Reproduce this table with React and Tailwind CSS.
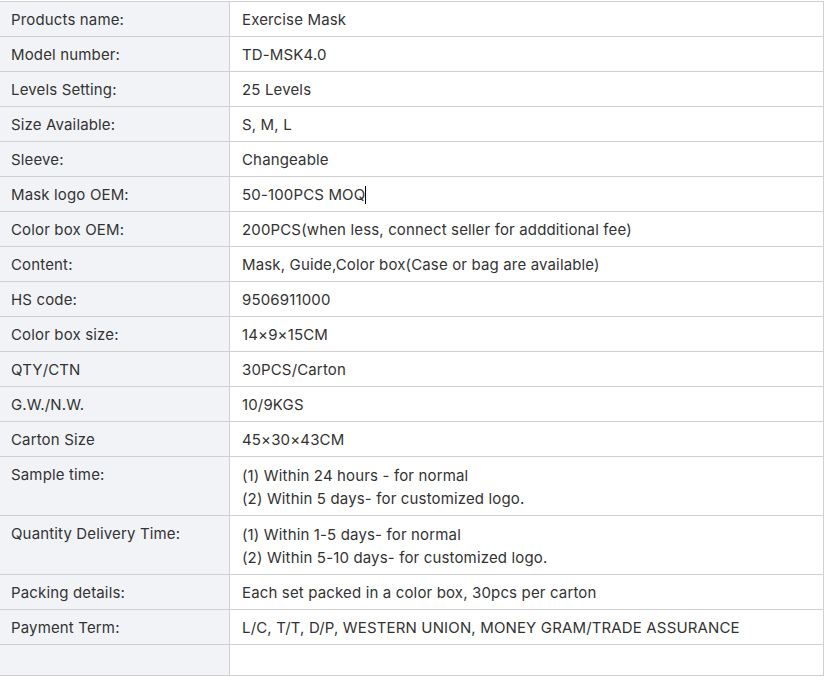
import React from "react"

const rows = [
  ["Products name:", ["Exercise Mask"]],
  ["Model number:", ["TD-MSK4.0"]],
  ["Levels Setting:", ["25 Levels"]],
  ["Size Available:", ["S, M, L"]],
  ["Sleeve:", ["Changeable"]],
  ["Mask logo OEM:", ["50-100PCS MOQ"], true],
  ["Color box OEM:", ["200PCS(when less, connect seller for addditional fee)"]],
  ["Content:", ["Mask, Guide,Color box(Case or bag are available)"]],
  ["HS code:", ["9506911000"]],
  ["Color box size:", ["14×9×15CM"]],
  ["QTY/CTN", ["30PCS/Carton"]],
  ["G.W./N.W.", ["10/9KGS"]],
  ["Carton Size", ["45×30×43CM"]],
  ["Sample time:", ["(1) Within 24 hours - for normal", "(2) Within 5 days- for customized logo."]],
  ["Quantity Delivery Time:", ["(1) Within 1-5 days- for normal", "(2) Within 5-10 days- for customized logo."]],
  ["Packing details:", ["Each set packed in a color box, 30pcs per carton"]],
  ["Payment Term:", ["L/C, T/T, D/P, WESTERN UNION, MONEY GRAM/TRADE ASSURANCE"]],
]

export default function App() {
  return (
    <div className="bg-white min-h-[680px] pt-px" style={{ fontFamily: "Inter, 'Noto Sans', sans-serif" }}>
      <div className="w-[824px] border-t border-r border-[#d0d0d0] text-[15px] tracking-[0.15px] leading-[22px] text-[#333]">
        {rows.map(([label, lines, caret]) => (
          <div key={label} className="flex border-b border-[#d0d0d0]">
            <div className="w-[230px] shrink-0 bg-[#f2f3f7] border-r border-[#d0d0d0] pl-[11px] pr-3 pt-[7px] pb-[5px]">
              {label}
            </div>
            <div className="flex-1 pl-3 pr-3 pt-[7px] pb-[5px]">
              {lines.map(l => (
                <div key={l} className={lines.length > 1 ? "leading-[23px]" : ""}>
                  {l}
                  {caret && <span className="inline-block w-px h-[18px] bg-black align-[-4px]"></span>}
                </div>
              ))}
            </div>
          </div>
        ))}
        <div className="flex border-b border-[#d0d0d0] h-[31px]">
          <div className="w-[230px] shrink-0 bg-[#f2f3f7] border-r border-[#d0d0d0]"></div>
          <div className="flex-1"></div>
        </div>
      </div>
    </div>
  )
}
